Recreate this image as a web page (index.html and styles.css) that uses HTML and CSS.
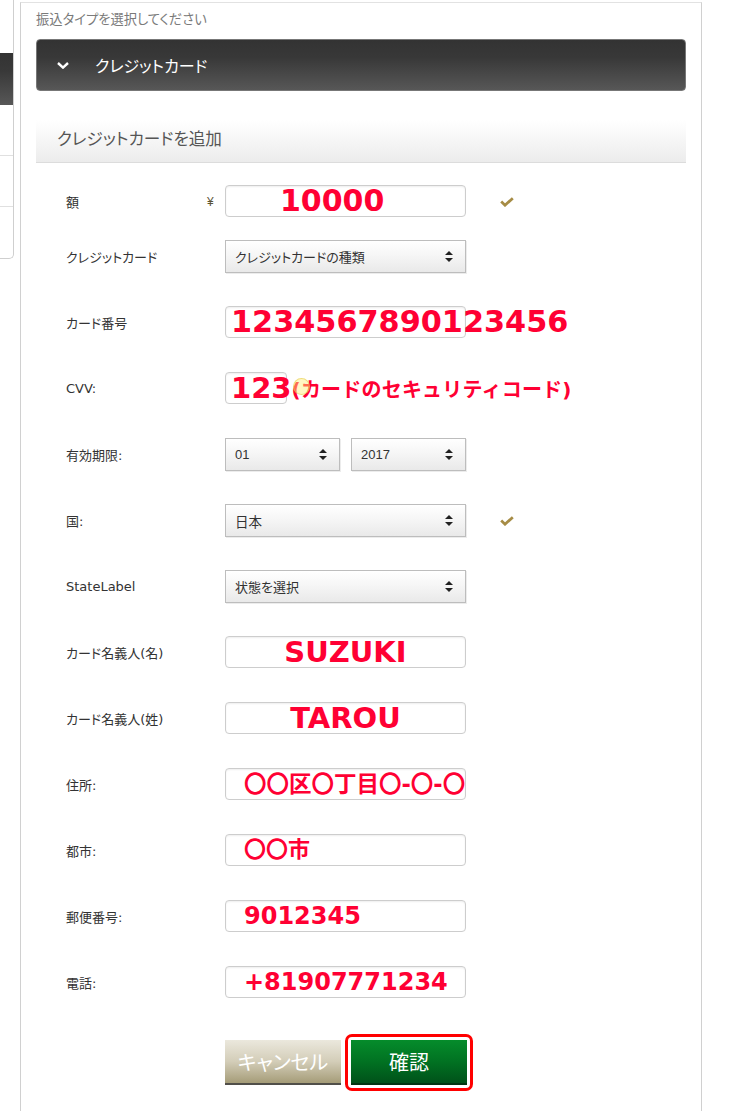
FILE: index.html
```html
<!DOCTYPE html>
<html lang="ja">
<head>
<meta charset="utf-8">
<title>クレジットカードを追加</title>
<link rel="stylesheet" href="styles.css">
</head>
<body>
<div class="page">
  <aside class="sidebar">
    <div class="sidebar__cell sidebar__cell--top"></div>
    <div class="sidebar__cell sidebar__cell--dark"></div>
    <div class="sidebar__cell"></div>
    <div class="sidebar__cell"></div>
    <div class="sidebar__cell sidebar__cell--end"></div>
  </aside>

  <main class="main">
    <p class="type-label">振込タイプを選択してください</p>

    <div class="type-bar">
      <svg class="type-bar__chevron" viewBox="0 0 12 7" aria-hidden="true"><polyline points="1,1 6,5.6 11,1"/></svg>
      <span class="type-bar__text">クレジットカード</span>
    </div>

    <div class="panel-head">クレジットカードを追加</div>

    <div class="form">
      <div class="row row--first">
        <span class="row__label row__label--short">額</span>
        <span class="row__unit">¥</span>
        <div class="row__field">
          <div class="box box--amount"><span class="red red--amount">10000</span></div>
        </div>
        <svg class="row__check" viewBox="0 0 14 10" aria-hidden="true"><path d="M1.2 4.6 L5 8.2 L12.8 1.2"/></svg>
      </div>

      <div class="row row--second">
        <span class="row__label">クレジットカード</span>
        <div class="row__field">
          <div class="select"><span class="select__text">クレジットカードの種類</span>
            <svg class="select__arrows" viewBox="0 0 8 11" aria-hidden="true"><path d="M4 0 L8 4 L0 4 Z M0 7 L8 7 L4 11 Z"/></svg></div>
        </div>
      </div>

      <div class="row">
        <span class="row__label">カード番号</span>
        <div class="row__field">
          <div class="box box--card"><span class="red red--card">1234567890123456</span></div>
        </div>
      </div>

      <div class="row">
        <span class="row__label">CVV:</span>
        <div class="row__field">
          <div class="box box--cvv"><span class="red red--cvv">123</span><span class="red red--note">(カードのセキュリティコード)</span></div>
          <span class="cursor-dot"></span>
        </div>
      </div>

      <div class="row">
        <span class="row__label">有効期限:</span>
        <div class="row__field row__field--split">
          <div class="select select--half"><span class="select__text">01</span>
            <svg class="select__arrows" viewBox="0 0 8 11" aria-hidden="true"><path d="M4 0 L8 4 L0 4 Z M0 7 L8 7 L4 11 Z"/></svg></div>
          <div class="select select--half"><span class="select__text">2017</span>
            <svg class="select__arrows" viewBox="0 0 8 11" aria-hidden="true"><path d="M4 0 L8 4 L0 4 Z M0 7 L8 7 L4 11 Z"/></svg></div>
        </div>
      </div>

      <div class="row">
        <span class="row__label">国:</span>
        <div class="row__field">
          <div class="select"><span class="select__text select__text--large">日本</span>
            <svg class="select__arrows" viewBox="0 0 8 11" aria-hidden="true"><path d="M4 0 L8 4 L0 4 Z M0 7 L8 7 L4 11 Z"/></svg></div>
        </div>
        <svg class="row__check" viewBox="0 0 14 10" aria-hidden="true"><path d="M1.2 4.6 L5 8.2 L12.8 1.2"/></svg>
      </div>

      <div class="row">
        <span class="row__label">StateLabel</span>
        <div class="row__field">
          <div class="select"><span class="select__text">状態を選択</span>
            <svg class="select__arrows" viewBox="0 0 8 11" aria-hidden="true"><path d="M4 0 L8 4 L0 4 Z M0 7 L8 7 L4 11 Z"/></svg></div>
        </div>
      </div>

      <div class="row">
        <span class="row__label">カード名義人(名)</span>
        <div class="row__field">
          <div class="box box--center"><span class="red red--name">SUZUKI</span></div>
        </div>
      </div>

      <div class="row">
        <span class="row__label">カード名義人(姓)</span>
        <div class="row__field">
          <div class="box box--center"><span class="red red--name">TAROU</span></div>
        </div>
      </div>

      <div class="row">
        <span class="row__label">住所:</span>
        <div class="row__field">
          <div class="box box--indent"><span class="red red--address">〇〇区〇丁目〇-〇-〇</span></div>
        </div>
      </div>

      <div class="row">
        <span class="row__label">都市:</span>
        <div class="row__field">
          <div class="box box--indent"><span class="red red--city">〇〇市</span></div>
        </div>
      </div>

      <div class="row">
        <span class="row__label">郵便番号:</span>
        <div class="row__field">
          <div class="box box--indent"><span class="red red--num">9012345</span></div>
        </div>
      </div>

      <div class="row">
        <span class="row__label">電話:</span>
        <div class="row__field">
          <div class="box box--indent"><span class="red red--num">+81907771234</span></div>
        </div>
      </div>

      <div class="actions">
        <button class="btn btn--cancel" type="button">キャンセル</button>
        <span class="highlight"><button class="btn btn--confirm" type="button">確認</button></span>
      </div>
    </div>
  </main>
</div>
</body>
</html>
```

FILE: styles.css
```css
* { box-sizing: border-box; }

html, body {
  margin: 0;
  padding: 0;
  background: #fff;
}

body {
  font-family: "Liberation Sans", "Noto Sans CJK JP", sans-serif;
  color: #333;
}

.page {
  display: flex;
  align-items: flex-start;
  width: 730px;
  min-height: 100vh;
}

/* left, partially visible panel */
.sidebar {
  flex: none;
  width: 14px;
  border-right: 1px solid #cfcfcf;
  border-bottom: 1px solid #cfcfcf;
  border-bottom-right-radius: 5px;
  overflow: hidden;
}

.sidebar__cell {
  height: 51px;
  border-bottom: 1px solid #e0e0e0;
}

.sidebar__cell--top {
  height: 53px;
  border-bottom: none;
}

.sidebar__cell--dark {
  height: 52px;
  border-bottom: none;
  background: linear-gradient(#333 0%, #393939 35%, #575757 100%);
}

.sidebar__cell--end {
  border-bottom: none;
}

/* main column */
.main {
  flex: none;
  align-self: stretch;
  width: 682px;
  margin: 2px 0 0 6px;
  padding: 0 15px;
  border: 1px solid #d0d0d0;
  border-top-color: #e2e2e2;
  border-bottom: none;
}

.type-label {
  margin: 8px 0 0;
  font-size: 13.3px;
  line-height: 18px;
  color: #7a7a7a;
  font-feature-settings: "palt";
}

.type-bar {
  display: flex;
  align-items: center;
  height: 52px;
  margin-top: 10px;
  padding-left: 20px;
  border: 1px solid #777;
  border-radius: 4px;
  background: linear-gradient(#333 0%, #383838 35%, #575757 100%);
  color: #fff;
  font-size: 16px;
  font-feature-settings: "palt";
}

.type-bar__chevron {
  width: 12px;
  height: 7px;
  margin-right: 26px;
  fill: none;
  stroke: #fff;
  stroke-width: 2.4;
}

.panel-head {
  display: flex;
  align-items: center;
  height: 50px;
  margin-top: 22px;
  padding-left: 21px;
  border-bottom: 1px solid #dcdcdc;
  background: linear-gradient(#fff 15%, #ececec 100%);
  color: #555;
  font-size: 16.6px;
  font-feature-settings: "palt";
}

/* form */
.form {
  display: flex;
  flex-direction: column;
  padding-left: 30px;
}

.row {
  display: grid;
  grid-template-columns: 141px 18px 241px 48px;
  align-items: center;
  height: 33px;
  margin-top: 33px;
}

.row--first,
.row--second {
  margin-top: 22px;
}

.row__label {
  grid-column: 1 / 3;
  font-family: "DejaVu Sans", "Noto Sans CJK JP", sans-serif;
  font-size: 13px;
  color: #333;
  white-space: nowrap;
  font-feature-settings: "palt";
}

.row__label--short {
  grid-column: 1;
}

.row__unit {
  grid-column: 2;
  font-size: 12px;
  color: #5b5234;
}

.row__field {
  grid-column: 3;
  align-self: start;
  position: relative;
}

.row__field--split {
  display: flex;
  gap: 11px;
}

.row__check {
  grid-column: 4;
  justify-self: end;
  width: 14px;
  height: 10px;
  fill: none;
  stroke: #a68c45;
  stroke-width: 2.8;
}

/* text boxes */
.box {
  display: flex;
  align-items: center;
  height: 32px;
  border: 1px solid #cdcdcd;
  border-radius: 4px;
  background: #fff;
  box-shadow: inset 0 1px 2px rgba(0, 0, 0, 0.07);
  white-space: nowrap;
}

.box--amount { padding-left: 54px; }
.box--card { padding-left: 5px; }
.box--cvv { width: 62px; padding-left: 5px; }
.box--center { justify-content: center; }
.box--indent { padding-left: 18px; }

.red {
  position: relative;
  color: #ff0033;
  font-family: "DejaVu Sans", "Noto Sans CJK JP", sans-serif;
  font-weight: bold;
  line-height: 1;
  white-space: nowrap;
}

.red--amount { font-size: 30px; }
.red--card { font-size: 30.3px; }
.red--cvv { font-size: 29px; }
.red--note { font-size: 20px; top: 2px; letter-spacing: 0.2px; }
.red--name { font-size: 29px; }
.red--address { font-size: 22.5px; }
.red--city { font-size: 22px; }
.red--num { font-size: 24px; }

.cursor-dot {
  position: absolute;
  left: 68px;
  top: 6px;
  width: 17px;
  height: 17px;
  border-radius: 50%;
  background: rgba(255, 238, 120, 0.45);
  border: 1px solid rgba(225, 200, 70, 0.55);
}

/* selects */
.select {
  display: flex;
  align-items: center;
  justify-content: space-between;
  width: 241px;
  height: 33px;
  padding: 0 12px 0 9px;
  border: 1px solid #bdbdbd;
  background: linear-gradient(#fff 0%, #f6f6f6 45%, #e9e9e9 100%);
  box-shadow: 1px 1px 0 #ececec;
  font-size: 13px;
  color: #333;
  font-feature-settings: "palt";
}

.select__text--large {
  font-size: 13.5px;
}

.select--half {
  width: 115px;
}

.select__arrows {
  width: 8px;
  height: 11px;
  fill: #222;
}

/* buttons */
.actions {
  display: flex;
  align-items: center;
  gap: 4px;
  margin-top: 35px;
  padding-left: 159px;
}

.btn {
  width: 116px;
  height: 45px;
  margin: 0;
  padding: 0;
  border: none;
  color: #fff;
  font-family: "Liberation Sans", "Noto Sans CJK JP", sans-serif;
  font-size: 20px;
  font-feature-settings: "palt";
  cursor: pointer;
}

.btn--cancel {
  background: linear-gradient(#ebe8dd 0%, #d3cdb8 50%, #a59c78 100%);
  border-bottom: 2px solid #514f49;
}

.btn--confirm {
  display: block;
  background: linear-gradient(#058c2b 0%, #017222 50%, #00521a 100%);
  border-bottom: 2px solid #023512;
}

.highlight {
  display: block;
  padding: 3px;
  border: 3px solid #ff0000;
  border-radius: 7px;
}
```
